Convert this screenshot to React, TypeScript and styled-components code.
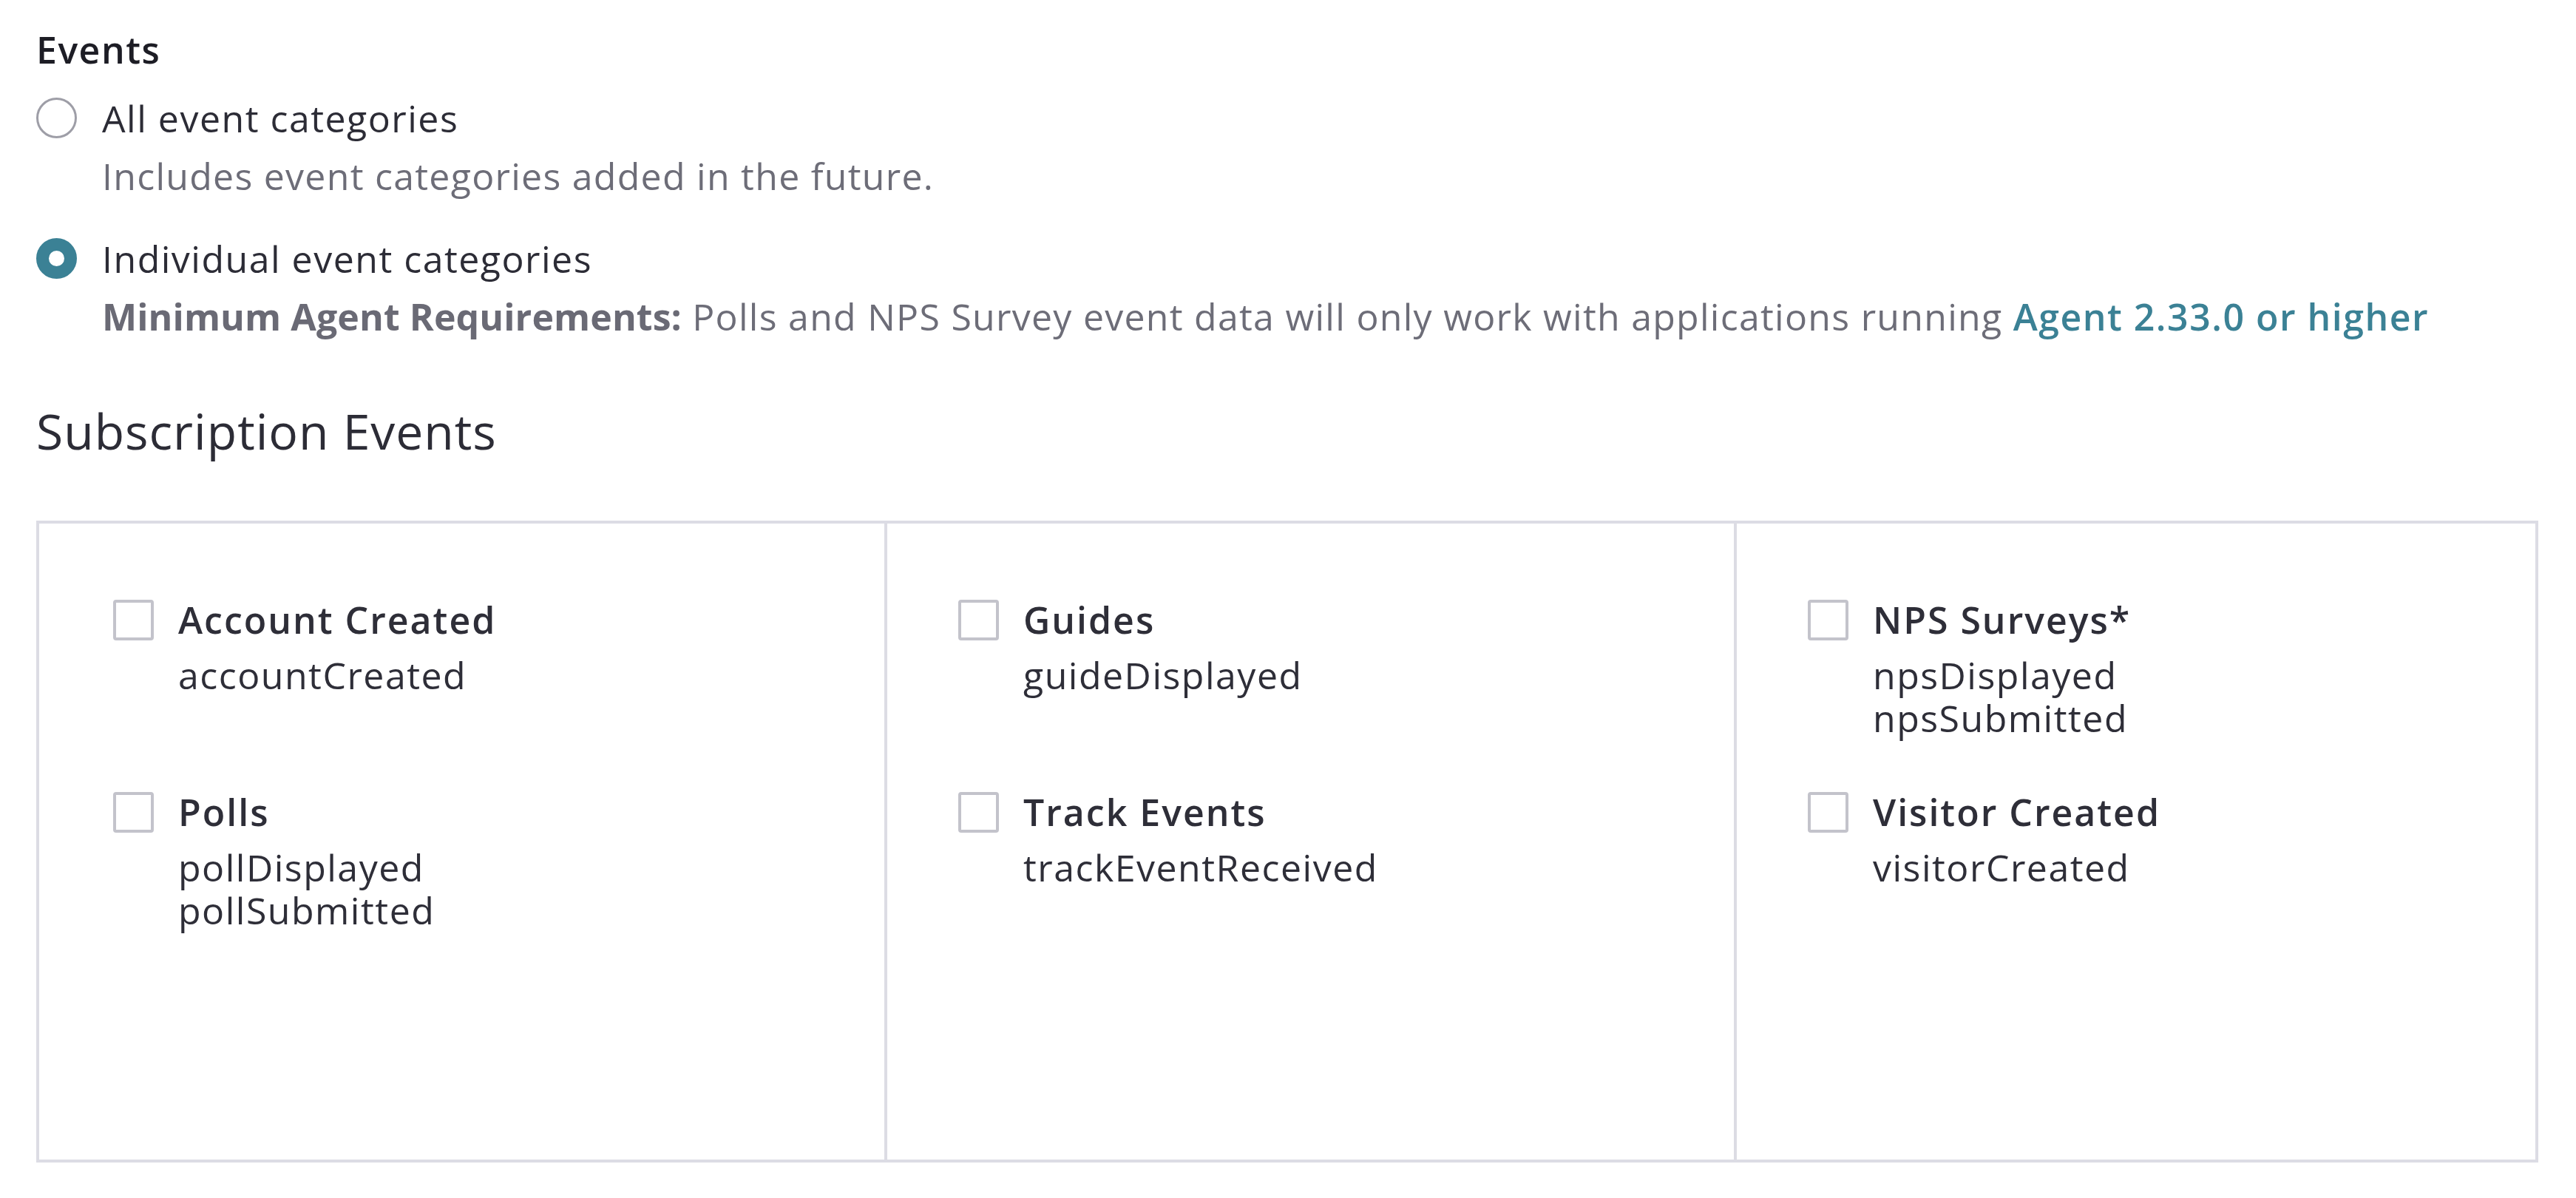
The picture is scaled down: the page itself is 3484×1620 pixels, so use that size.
import React from "react";
import styled, { createGlobalStyle } from "styled-components";

const GlobalStyle = createGlobalStyle`
  html, body {
    margin: 0;
    padding: 0;
    background: #ffffff;
  }
  body {
    font-family: "Open Sans", "Liberation Sans", sans-serif;
    color: #2f2f3a;
  }
`;

const TEAL = "#3b8195";

const Page = styled.div`
  padding: 37px 0 0 49px;
  width: 3384px;
`;

const SectionTitle = styled.h2`
  margin: 0;
  font-size: 50px;
  line-height: 60px;
  font-weight: 600;
  letter-spacing: 1.5px;
  color: #1d1d25;
`;

const RadioGroup = styled.div`
  display: flex;
  flex-direction: column;
  gap: 34px;
  margin-top: 24px;
`;

const RadioOption = styled.label`
  display: grid;
  grid-template-columns: 55px 1fr;
  column-gap: 34px;
  align-items: start;
`;

const RadioCircle = styled.span<{ $checked?: boolean }>`
  box-sizing: border-box;
  width: 55px;
  height: 55px;
  margin-top: 11px;
  border-radius: 50%;
  background: #ffffff;
  border: ${(p) => (p.$checked ? `17px solid ${TEAL}` : "3px solid #9e9ea7")};
`;

const OptionText = styled.div`
  display: flex;
  flex-direction: column;
`;

const OptionLabel = styled.span`
  font-size: 50px;
  line-height: 78px;
  letter-spacing: 1.5px;
  color: #2c2c36;
`;

const OptionHelp = styled.span`
  font-size: 50px;
  line-height: 78px;
  letter-spacing: 1.27px;
  color: #6d6d78;
  white-space: nowrap;
`;

const Strong = styled.strong`
  font-weight: 700;
  letter-spacing: 0.1px;
  color: #6a6a75;
`;

const Link = styled.a`
  color: ${TEAL};
  font-weight: 600;
  letter-spacing: 1.5px;
  text-decoration: none;
`;

const SubHeading = styled.h3`
  margin: 70px 0 0;
  font-size: 66px;
  line-height: 90px;
  font-weight: 400;
  letter-spacing: 1px;
  color: #2c2c36;
`;

const EventGrid = styled.div`
  box-sizing: border-box;
  margin-top: 77px;
  width: 3384px;
  height: 868px;
  border: 4px solid #dcdce4;
  display: grid;
  grid-template-columns: 1143px 1149px 1fr;
`;

const EventColumn = styled.div<{ $first?: boolean }>`
  box-sizing: border-box;
  border-left: ${(p) => (p.$first ? "none" : "4px solid #dcdce4")};
  padding: 101px 0 0 ${(p) => (p.$first ? 100 : 96)}px;
  display: flex;
  flex-direction: column;
`;

const EventItem = styled.label`
  display: flex;
  align-items: flex-start;
  gap: 33px;
  min-height: 260px;
`;

const Checkbox = styled.span`
  box-sizing: border-box;
  flex: none;
  width: 55px;
  height: 55px;
  margin-top: 2px;
  border: 4px solid #c3c3cb;
  border-radius: 4px;
  background: #ffffff;
`;

const ItemText = styled.div`
  display: flex;
  flex-direction: column;
`;

const ItemTitle = styled.span`
  font-size: 50px;
  line-height: 58px;
  font-weight: 600;
  letter-spacing: 2px;
  color: #2e2e38;
  margin-bottom: 17px;
`;

const ItemCodes = styled.span`
  font-size: 50px;
  line-height: 58px;
  letter-spacing: 1.5px;
  color: #2e2e38;
`;

type EventDef = { title: string; codes: string[] };

const columns: EventDef[][] = [
  [
    { title: "Account Created", codes: ["accountCreated"] },
    { title: "Polls", codes: ["pollDisplayed", "pollSubmitted"] },
  ],
  [
    { title: "Guides", codes: ["guideDisplayed"] },
    { title: "Track Events", codes: ["trackEventReceived"] },
  ],
  [
    { title: "NPS Surveys*", codes: ["npsDisplayed", "npsSubmitted"] },
    { title: "Visitor Created", codes: ["visitorCreated"] },
  ],
];

export default function App() {
  return (
    <>
      <GlobalStyle />
      <Page>
        <SectionTitle>Events</SectionTitle>
        <RadioGroup>
          <RadioOption>
            <RadioCircle />
            <OptionText>
              <OptionLabel>All event categories</OptionLabel>
              <OptionHelp>Includes event categories added in the future.</OptionHelp>
            </OptionText>
          </RadioOption>
          <RadioOption>
            <RadioCircle $checked />
            <OptionText>
              <OptionLabel>Individual event categories</OptionLabel>
              <OptionHelp>
                <Strong>Minimum Agent Requirements:</Strong> Polls and NPS Survey event data will
                only work with applications running <Link href="#">Agent 2.33.0 or higher</Link>
              </OptionHelp>
            </OptionText>
          </RadioOption>
        </RadioGroup>
        <SubHeading>Subscription Events</SubHeading>
        <EventGrid>
          {columns.map((col, i) => (
            <EventColumn key={i} $first={i === 0}>
              {col.map((ev) => (
                <EventItem key={ev.title}>
                  <Checkbox />
                  <ItemText>
                    <ItemTitle>{ev.title}</ItemTitle>
                    <ItemCodes>
                      {ev.codes.map((c, j) => (
                        <React.Fragment key={c}>
                          {j > 0 && <br />}
                          {c}
                        </React.Fragment>
                      ))}
                    </ItemCodes>
                  </ItemText>
                </EventItem>
              ))}
            </EventColumn>
          ))}
        </EventGrid>
      </Page>
    </>
  );
}
